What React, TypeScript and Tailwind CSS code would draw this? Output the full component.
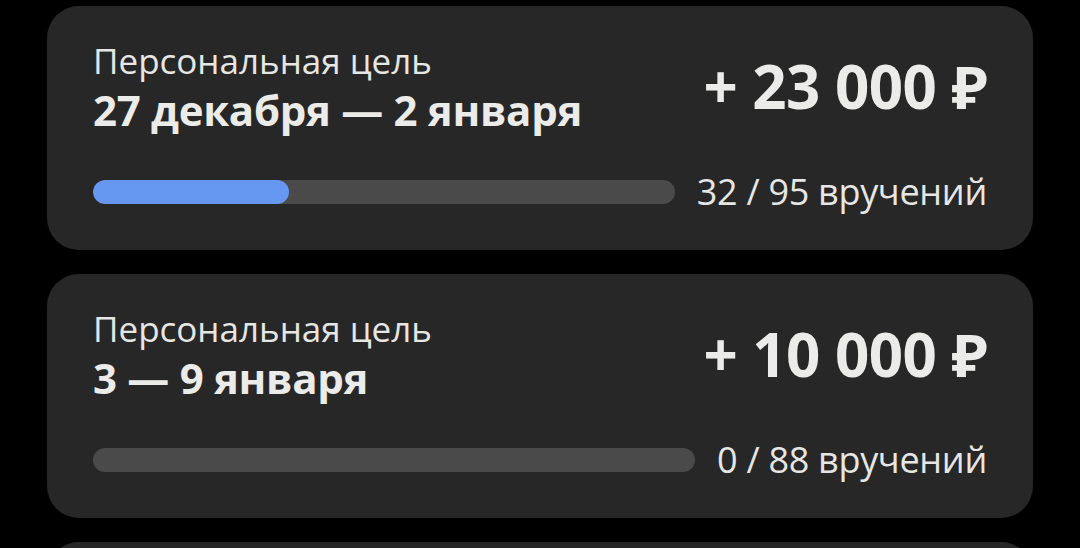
import React from "react";

type Goal = {
  dates: string;
  amount: string;
  done: number;
  total: number;
};

const goals: Goal[] = [
  { dates: "27 декабря — 2 января", amount: "+ 23 000 ₽", done: 32, total: 95 },
  { dates: "3 — 9 января", amount: "+ 10 000 ₽", done: 0, total: 88 },
];

function GoalCard({ g }: { g: Goal }) {
  const pct = g.total ? (g.done / g.total) * 100 : 0;
  return (
    <div className="rounded-[32px] bg-[#272727] pl-[46px] pr-[46px] pt-[34px] pb-[38px]">
      <div className="flex items-center justify-between">
        <div className="flex flex-col">
          <div className="text-[35px] leading-[42px] text-[#e6e6e4]">Персональная цель</div>
          <div className="text-[42px] leading-[56px] font-bold text-[#ebebe9] tracking-[-0.3px]">{g.dates}</div>
        </div>
        <div className="pb-[6px] text-[60px] leading-[64px] font-bold text-[#ebebe9] tracking-[-0.5px]">{g.amount}</div>
      </div>
      <div className="mt-[34px] flex items-center gap-[22px] h-[40px]">
        <div className="flex-1 h-[24px] rounded-full bg-[#4a4a4a] overflow-hidden">
          <div className="h-full rounded-full bg-[#6698f2]" style={{ width: `${pct}%` }} />
        </div>
        <div className="text-[36px] leading-[40px] text-[#e6e6e4] whitespace-nowrap tracking-[-0.3px]">
          {g.done} / {g.total} вручений
        </div>
      </div>
    </div>
  );
}

export default function App() {
  return (
    <div
      className="w-[1080px] h-[548px] overflow-hidden bg-black px-[47px] pt-[6px] flex flex-col gap-[24px]"
      style={{ fontFamily: '"Open Sans", "Noto Sans", sans-serif' }}
    >
      {goals.map((g, i) => (
        <GoalCard key={i} g={g} />
      ))}
      <div className="rounded-[32px] bg-[#272727] h-[100px] shrink-0" />
    </div>
  );
}
